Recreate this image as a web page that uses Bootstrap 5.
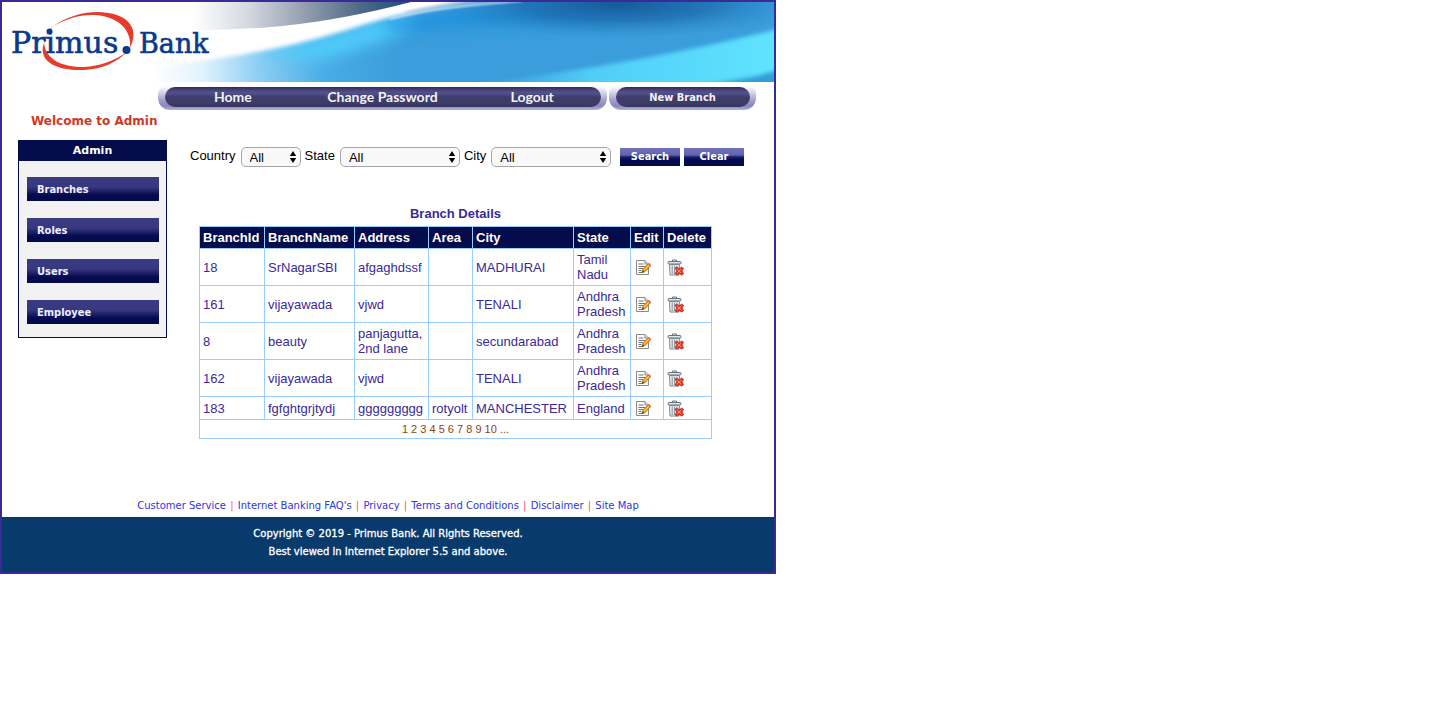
<!DOCTYPE html>
<html lang="en">
<head>
<meta charset="utf-8">
<meta name="viewport" content="width=device-width, initial-scale=1">
<title>Primus Bank - Branch Details</title>
<link href="https://cdn.jsdelivr.net/npm/bootstrap@5.3.0/dist/css/bootstrap.min.css" rel="stylesheet">
<style>
:root { --edge: #3a2a98; --navy: #040c4c; --ink: #3a2a98; --rule: #99ccff; }
body { font-family: "Liberation Sans", Arial, sans-serif; font-size: 13px; line-height: 15px; color: #000; background: #fff; }
.verdana { font-family: "DejaVu Sans", Verdana, sans-serif; }
.tahoma { font-family: "DejaVu Sans Condensed", "DejaVu Sans", Tahoma, sans-serif; font-weight: 700; font-size: 11px; }
.page-frame { max-width: 776px; border: 2px solid var(--edge); }
.banner { height: 80px; width: 100%; }
.top-nav { padding: 4px 18px 0 156px; height: 28px; gap: 2px; }
.pill-bar { position: relative; z-index: 0; height: 24px; border-radius: 8px 8px 12px 12px; background: linear-gradient(#fff 0, #d9d8ec 6px, #a3a1ce 14px, #8886bd 20px, #b5b4da 100%); }
.pill-bar::before { content: ""; position: absolute; z-index: -1; inset: 1px 6px 3px 7px; border-radius: 10px; background: linear-gradient(#2f2d55 0, #4c4a83 4px, #53528f 6px, #3e3d69 10px, #3d3c66 17px, #35345c 100%); }
.pill-bar a { color: #f2f2fa; text-decoration: none; text-align: center; line-height: 21px; }
.main-nav { flex: 0 1 449px; }
.main-nav a { flex: 1 1 0; font-family: Lato, "Open Sans", sans-serif; font-weight: 700; font-size: 14px; }
.branch-nav { flex: 0 1 147px; }
.branch-nav a { line-height: 23px; }
.welcome { color: #cc3a26; font-size: 12px; line-height: 18px; margin: 2px 0 0; padding-left: 29px; font-weight: 700; }
.side { flex: 0 0 149px; border: 1px solid var(--navy); background: #f2f2f2; margin: 10px 0 0 16px; }
.side h2 { background: var(--navy); color: #fff; font-size: 11px; font-weight: 700; line-height: 20px; margin: 0; text-align: center; }
.side nav { padding: 16px 7px 13px 8px; gap: 17px; }
.side a { display: block; height: 24px; line-height: 25px; padding-left: 10px; color: #eef; text-decoration: none; background: linear-gradient(#3b3b83 0, #37387f 10px, #050b50 18px, #040a4a 100%); }
.work { flex: 1 1 0; min-width: 0; padding: 17px 30px 0 23px; }
.filters { gap: 4px; height: 20px; }
.filters label { margin-right: 1px; line-height: 18px; height: 20px; }
.filters .form-select { height: 20px; padding: 0 20px 0 8px; font-size: 13px; line-height: 17px; color: #000; border: 1px solid #a6a6a6; border-radius: 5px; background-color: #f8f8f8; background-size: 8px 12px; background-position: right 3px center; background-image: url("data:image/svg+xml,%3Csvg xmlns='http://www.w3.org/2000/svg' viewBox='0 0 8 12'%3E%3Cpath d='M4 0l3.2 5H.8zM4 12l3.2-5H.8z'/%3E%3C/svg%3E"); }
.filters .pick-short { width: 60px; }
.filters .pick-long { width: 120px; }
.btn-bank { width: 60px; height: 18px; padding: 0; border: 0; border-radius: 0; color: #fff; line-height: 16px; background: linear-gradient(#7172bd 0, #6163ad 7px, #1a2065 9px, #040a4e 12px, #040a4e 100%); }
.btn-bank:hover { color: #fff; }
.branches { width: 513px; table-layout: fixed; margin: 38px 0 0 9px; border-collapse: collapse; color: var(--ink); caption-side: top; }
.branches caption { color: var(--ink); font-weight: 700; font-size: 13px; line-height: 17px; padding: 0 0 4px; text-align: center; }
.branches th, .branches td { border: 1px solid var(--rule); padding: 3px; vertical-align: middle; }
.branches th { background: var(--navy); color: #fff; height: 22px; }
.branches td { height: 37px; }
.branches .one-line td { height: 23px; padding-block: 0; }
.branches .pager td { height: 19px; padding: 0; text-align: center; font-size: 11px; }
.pager a, .pager span { color: #8b4513; text-decoration: none; }
.branches button { display: block; border: 0; background: none; padding: 0; width: 17px; height: 17px; }
.branches svg { display: block; }
.foot-links { font-size: 10px; line-height: 16px; margin-top: 59px; padding-bottom: 3px; text-align: center; color: #f0506e; }
.foot-links a { color: #2d35e6; text-decoration: none; margin: 0 1px; }
.foot { background: #083a6b; color: #fff; font-size: 10px; line-height: 18px; font-weight: 500; padding: 8px 0 11px; text-align: center; -webkit-text-stroke: .3px #fff; }
.foot p { margin: 0; }
</style>
</head>
<body>
<svg class="d-none" aria-hidden="true">
  <symbol id="ico-edit" viewBox="-1 0 17 17">
    <path d="M1.5 1.5h8.500l3.500 3.500v10.500h-12z" fill="#fbfbf8" stroke="#8c8c86"/>
    <path d="M10 1.500v3.500h3.500" fill="#ddd" stroke="#8c8c86"/>
    <path d="M3.500 5h5M3.500 7.500h7M3.500 9.500h5M3.500 11.500h3M3.500 13.500h4" stroke="#777" fill="none"/>
    <path d="M7 13.500l1-3.200 5.200-5.600 2.300 2.200-5.300 5.600z" fill="#f59a1c" stroke="#b5651d" stroke-width=".7"/>
    <path d="M9 11.200l5-5.300" stroke="#ffd36b" stroke-width="1"/>
    <path d="M6.800 13.800l1-2.400 1.600 1.500z" fill="#4a2b10"/>
    <path d="M13 4.900l1-1 2.200 2.100-.9 1z" fill="#e46a50"/>
  </symbol>
  <symbol id="ico-delete" viewBox="0 0 17 17">
    <path d="M5.500 2.500v-1.500h4v1.500" fill="none" stroke="#66727c"/>
    <rect x="1" y="2.500" width="13" height="2.500" rx="1" fill="#dfe5ea" stroke="#66727c"/>
    <path d="M2.500 5.500h10l-.5 10.500h-9z" fill="#eef2f5" stroke="#7b8791"/>
    <path d="M5.200 6.500v8.500M7.500 6.500v8.500" stroke="#8d99a3" stroke-width="1.200"/>
    <path d="M9.800 6.500v2" stroke="#8d99a3"/>
    <path d="M8 9l2-1 2.300 1.700L14.600 8l2 1.200-1.500 2.700 1.500 2.900-2 1.400-2.300-1.600L10 16.200l-2-1.400 1.600-2.900z" fill="#e23a26" stroke="#a51c12" stroke-width=".6"/>
    <path d="M10.200 10.200l4 3.800M14.200 10.200l-4 3.800" stroke="#ff9a86" stroke-width=".9"/>
  </symbol>
</svg>

<div class="page-frame">
  <header>
    <svg class="banner d-block" viewBox="0 0 772 80" preserveAspectRatio="xMinYMin slice" role="img" aria-label="Primus Bank">
      <defs>
        <linearGradient id="sky" x1="0" x2="1"><stop offset="0" stop-color="#fff"/><stop offset=".08" stop-color="#e2f3fd"/><stop offset=".17" stop-color="#8fcff4"/><stop offset=".28" stop-color="#48ace4"/><stop offset=".4" stop-color="#3b9ddb"/><stop offset="1" stop-color="#3b9ddb"/></linearGradient>
        <linearGradient id="smoke" gradientUnits="userSpaceOnUse" x1="190" x2="412" y1="0" y2="0"><stop offset="0" stop-color="#fff"/><stop offset=".25" stop-color="#d5d9e1"/><stop offset=".5" stop-color="#95a0b0"/><stop offset=".75" stop-color="#506b88"/><stop offset="1" stop-color="#184b78"/></linearGradient>
        <radialGradient id="deep"><stop offset="0" stop-color="#15599a"/><stop offset=".5" stop-color="#1b6bad" stop-opacity=".75"/><stop offset="1" stop-color="#2a86c8" stop-opacity="0"/></radialGradient>
        <linearGradient id="aqua" x1="0" x2="1"><stop offset="0" stop-color="#45b4ec" stop-opacity="0"/><stop offset=".4" stop-color="#50cdf7"/><stop offset="1" stop-color="#60e4ff"/></linearGradient>
        <filter id="soft1"><feGaussianBlur stdDeviation="1"/></filter>
        <filter id="soft2"><feGaussianBlur stdDeviation="2"/></filter>
        <filter id="soft6" x="-20%" y="-60%" width="140%" height="220%"><feGaussianBlur stdDeviation="7"/></filter>
      </defs>
      <rect width="772" height="80" fill="#fff"/>
      <rect x="150" width="622" height="80" fill="url(#sky)"/>
      <path d="M250 54Q320 38 370 20L420 12L400 32Q350 48 320 58Z" fill="#50ccfb" filter="url(#soft6)"/>
      <path d="M380 22Q450 2 560 6L620 20Q500 22 390 30Z" fill="#1e8fdd" opacity=".8" filter="url(#soft6)"/>
      <ellipse cx="615" cy="2" rx="190" ry="34" fill="url(#deep)"/>
      <path d="M460 84Q640 62 780 26V90H460Z" fill="url(#aqua)" filter="url(#soft2)"/>
      <path d="M690 84Q745 78 776 68V84Z" fill="#319ed6" filter="url(#soft2)"/>
      <path d="M130 -6H510Q410 6 345 28Q255 56 130 66Z" fill="#fff" filter="url(#soft2)"/>
      <path d="M388 17Q430 5 520 -1" fill="none" stroke="#d5e8f5" stroke-width="1.500" filter="url(#soft1)"/>
      <path d="M404 10Q440 2 470 -1" fill="none" stroke="#8e8f9c" stroke-opacity=".6" filter="url(#soft1)"/>
      <path d="M190 0H409Q340 18 280 24Q240 28 190 28Z" fill="url(#smoke)"/>
      <path d="M50 25C65 14 82 10 95 10C123 10 139 24 128 46C130 29 117 14 92 13C77 12.500 63 17 50 25Z" fill="#e83c2a"/>
      <path d="M42 41C35 60 56 69 82 68C101 67 115 60 125 50C112 59 98 64 82 65C60 65 44 58 42 41Z" fill="#e83c2a"/>
      <path d="M42 41Q43 34 50 25" fill="none" stroke="#e8705f" stroke-opacity=".6"/>
      <g font-family="'DejaVu Serif', Georgia, serif" fill="#0b398c" stroke="#0b398c" stroke-width=".6">
        <text x="9" y="51" font-size="30">Primus</text>
        <text x="137" y="51" font-size="27">Bank</text>
      </g>
      <circle cx="124.500" cy="48" r="4" fill="#0b398c"/>
      <circle cx="47.500" cy="29.500" r="3" fill="#0b398c"/>
    </svg>
    <div class="top-nav d-flex">
      <nav class="pill-bar main-nav d-flex" aria-label="Main">
        <a href="#">Home</a><a href="#">Change Password</a><a href="#">Logout</a>
      </nav>
      <nav class="pill-bar branch-nav" aria-label="Branch"><a class="tahoma d-block" href="#">New Branch</a></nav>
    </div>
    <p class="welcome verdana">Welcome to Admin</p>
  </header>

  <main class="d-flex align-items-start">
    <aside class="side">
      <h2 class="verdana">Admin</h2>
      <nav class="d-flex flex-column tahoma" aria-label="Admin">
        <a href="#">Branches</a><a href="#">Roles</a><a href="#">Users</a><a href="#">Employee</a>
      </nav>
    </aside>
    <section class="work">
      <form class="filters d-flex align-items-center">
        <label for="country">Country</label>
        <select id="country" class="form-select pick-short"><option>All</option></select>
        <label for="state">State</label>
        <select id="state" class="form-select pick-long"><option>All</option></select>
        <label for="city">City</label>
        <select id="city" class="form-select pick-long"><option>All</option></select>
        <button type="button" class="btn btn-bank tahoma ms-auto">Search</button>
        <button type="reset" class="btn btn-bank tahoma">Clear</button>
      </form>
      <table class="branches">
        <caption>Branch Details</caption>
        <colgroup><col style="width:65px"><col style="width:90px"><col style="width:74px"><col style="width:44px"><col style="width:101px"><col style="width:57px"><col style="width:33px"><col style="width:48px"></colgroup>
        <thead>
          <tr><th>BranchId</th><th>BranchName</th><th>Address</th><th>Area</th><th>City</th><th>State</th><th>Edit</th><th>Delete</th></tr>
        </thead>
        <tbody>
          <tr><td>18</td><td>SrNagarSBI</td><td>afgaghdssf</td><td></td><td>MADHURAI</td><td>Tamil Nadu</td>
            <td><button aria-label="Edit"><svg width="17" height="17"><use href="#ico-edit"/></svg></button></td><td><button aria-label="Delete"><svg width="17" height="17"><use href="#ico-delete"/></svg></button></td></tr>
          <tr><td>161</td><td>vijayawada</td><td>vjwd</td><td></td><td>TENALI</td><td>Andhra Pradesh</td>
            <td><button aria-label="Edit"><svg width="17" height="17"><use href="#ico-edit"/></svg></button></td><td><button aria-label="Delete"><svg width="17" height="17"><use href="#ico-delete"/></svg></button></td></tr>
          <tr><td>8</td><td>beauty</td><td>panjagutta, 2nd lane</td><td></td><td>secundarabad</td><td>Andhra Pradesh</td>
            <td><button aria-label="Edit"><svg width="17" height="17"><use href="#ico-edit"/></svg></button></td><td><button aria-label="Delete"><svg width="17" height="17"><use href="#ico-delete"/></svg></button></td></tr>
          <tr><td>162</td><td>vijayawada</td><td>vjwd</td><td></td><td>TENALI</td><td>Andhra Pradesh</td>
            <td><button aria-label="Edit"><svg width="17" height="17"><use href="#ico-edit"/></svg></button></td><td><button aria-label="Delete"><svg width="17" height="17"><use href="#ico-delete"/></svg></button></td></tr>
          <tr class="one-line"><td>183</td><td>fgfghtgrjtydj</td><td>ggggggggg</td><td>rotyolt</td><td>MANCHESTER</td><td>England</td>
            <td><button aria-label="Edit"><svg width="17" height="17"><use href="#ico-edit"/></svg></button></td><td><button aria-label="Delete"><svg width="17" height="17"><use href="#ico-delete"/></svg></button></td></tr>
          <tr class="pager"><td colspan="8"><span>1</span> <a href="#">2</a> <a href="#">3</a> <a href="#">4</a> <a href="#">5</a> <a href="#">6</a> <a href="#">7</a> <a href="#">8</a> <a href="#">9</a> <a href="#">10</a> <a href="#">...</a></td></tr>
        </tbody>
      </table>
    </section>
  </main>

  <footer class="verdana">
    <div class="foot-links"><a href="#">Customer Service</a> | <a href="#">Internet Banking FAQ's</a> | <a href="#">Privacy</a> | <a href="#">Terms and Conditions</a> | <a href="#">Disclaimer</a> | <a href="#">Site Map</a></div>
    <div class="foot"><p>Copyright © 2019 - Primus Bank. All Rights Reserved.</p><p>Best viewed in Internet Explorer 5.5 and above.</p></div>
  </footer>
</div>
<script src="https://cdn.jsdelivr.net/npm/bootstrap@5.3.0/dist/js/bootstrap.bundle.min.js"></script>
</body>
</html>
